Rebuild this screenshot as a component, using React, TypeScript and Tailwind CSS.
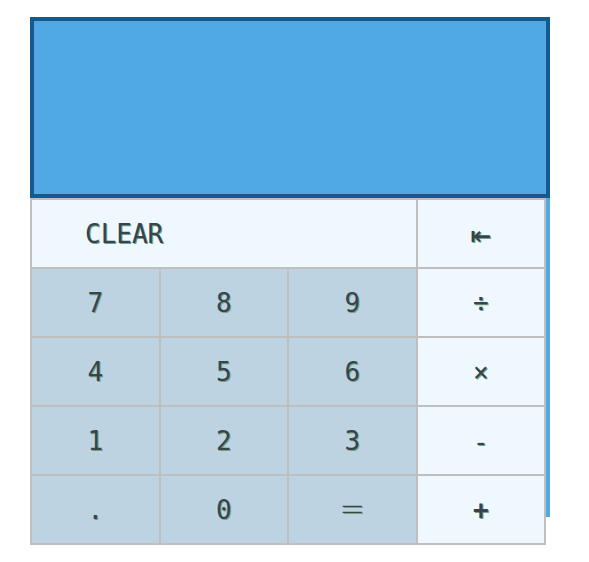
import React from 'react'

type Key = { label: string; op?: boolean; wide?: boolean; cls?: string }

const KEYS: Key[] = [
  { label: 'CLEAR', op: true, wide: true },
  { label: '⇤', op: true, cls: 'text-[34px] font-light' },
  { label: '7' },
  { label: '8' },
  { label: '9' },
  { label: '÷', op: true },
  { label: '4' },
  { label: '5' },
  { label: '6' },
  { label: '×', op: true },
  { label: '1' },
  { label: '2' },
  { label: '3' },
  { label: '-', op: true, cls: 'pt-[4px]' },
  { label: '.' },
  { label: '0' },
  { label: '＝', cls: 'font-light' },
  { label: '+', op: true, cls: 'font-bold' },
]

const FONT = "font-['DejaVu_Sans_Mono','Noto_Sans_CJK_SC',monospace]"

export default function App() {
  return (
    <div className="min-h-screen bg-white pl-[30px] pt-[17px]">
      <div className="h-[500px] w-[520px] bg-[#50a8e4]">
        <div className="h-[181px] w-[520px] border-4 border-[#145a8a] bg-[#50a8e4]" />
        <div className="grid w-[516px] grid-cols-4 grid-rows-[repeat(5,67px)] gap-[2px] bg-[#bfbfbf] p-[2px]">
          {KEYS.map((k) => (
            <button
              key={k.label}
              type="button"
              className={`${FONT} flex items-center pt-[1px] text-[26px] text-[#36444e] [text-shadow:1px_1px_0_#72a283] ${
                k.wide ? 'col-span-3 justify-start pl-[53px]' : 'justify-center'
              } ${k.op ? 'bg-[#eef8fe]' : 'bg-[#bed3e1]'} ${k.cls ?? ''}`}
            >
              {k.label}
            </button>
          ))}
        </div>
      </div>
    </div>
  )
}
